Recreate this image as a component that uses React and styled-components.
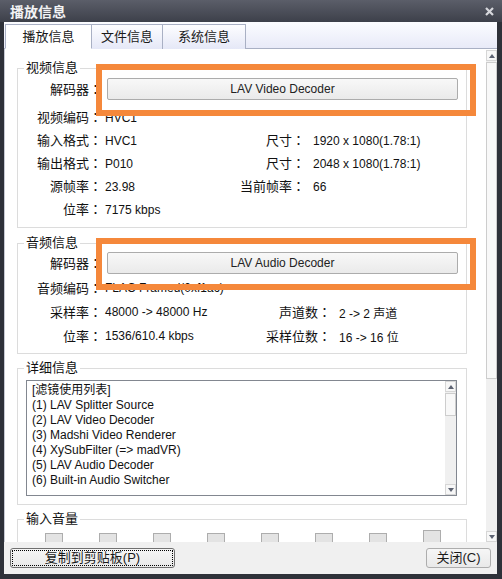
import styled, { createGlobalStyle } from "styled-components";

const GlobalStyle = createGlobalStyle`
  html, body {
    margin: 0;
    padding: 0;
  }
  body {
    font-family: "Liberation Sans", "Noto Sans CJK SC", sans-serif;
    font-size: 12px;
    color: #111;
    background: #30333c;
  }
`;

const videoRows = [
  ["视频编码", "HVC1", "", ""],
  ["输入格式", "HVC1", "尺寸", "1920 x 1080(1.78:1)"],
  ["输出格式", "P010", "尺寸", "2048 x 1080(1.78:1)"],
  ["源帧率", "23.98", "当前帧率", "66"],
  ["位率", "7175 kbps", "", ""],
];

const audioRows = [
  ["音频编码", "FLAC Framed(0xf1ac)", "", ""],
  ["采样率", "48000 -> 48000 Hz", "声道数", "2 -> 2 声道"],
  ["位率", "1536/610.4 kbps", "采样位数", "16 -> 16 位"],
];

const filters = [
  "[滤镜使用列表]",
  "(1) LAV Splitter Source",
  "(2) LAV Video Decoder",
  "(3) Madshi Video Renderer",
  "(4) XySubFilter (=> madVR)",
  "(5) LAV Audio Decoder",
  "(6) Built-in Audio Switcher",
];

function FieldLabel({ text }) {
  if (!text) return <Label />;
  return (
    <Label>
      {text}
      <Colon>：</Colon>
    </Label>
  );
}

export default function App() {
  return (
    <>
      <GlobalStyle />
      <WindowDiv>
        <TitleBar>
          <span>播放信息</span>
          <svg width="9" height="9" viewBox="0 0 9 9">
            <path d="M1 1 L8 8 M8 1 L1 8" stroke="#d6d7dc" strokeWidth="2.2" />
          </svg>
        </TitleBar>
        <ClientDiv>
          <TabStrip>
            <Tab $w={87} $active>播放信息</Tab>
            <Tab $w={71}>文件信息</Tab>
            <Tab $w={83}>系统信息</Tab>
          </TabStrip>
          <PageDiv>
            <ContentDiv>
              <Group $mb={7}>
                <Legend>视频信息</Legend>
                <DecoderRow $mt={2} $mb={6}>
                  <FieldLabel text="解码器" />
                  <DecoderButton>LAV Video Decoder</DecoderButton>
                  <Highlight />
                </DecoderRow>
                {videoRows.map((r, i) => (
                  <InfoRow key={i} $h={23} $rl={80}>
                    <FieldLabel text={r[0]} />
                    <Value>{r[1]}</Value>
                    <FieldLabel text={r[2]} />
                    <RightValue>{r[3]}</RightValue>
                  </InfoRow>
                ))}
                <GroupEnd $h={6} />
              </Group>

              <Group $mb={6}>
                <Legend>音频信息</Legend>
                <DecoderRow $mt={1} $mb={2}>
                  <FieldLabel text="解码器" />
                  <DecoderButton>LAV Audio Decoder</DecoderButton>
                  <Highlight />
                </DecoderRow>
                {audioRows.map((r, i) => (
                  <InfoRow key={i} $h={24} $rl={106}>
                    <FieldLabel text={r[0]} />
                    <Value>{r[1]}</Value>
                    <FieldLabel text={r[2]} />
                    <RightValue>{r[3]}</RightValue>
                  </InfoRow>
                ))}
                <GroupEnd $h={5} />
              </Group>

              <Group $mb={6}>
                <Legend>详细信息</Legend>
                <ListBox>
                  <ListText>
                    {filters.map((f) => (
                      <div key={f}>{f}</div>
                    ))}
                  </ListText>
                  <ScrollBar $m="0">
                    <ArrowBtn>
                      <Arrow />
                    </ArrowBtn>
                    <Thumb $h={23} />
                    <Track />
                    <ArrowBtn>
                      <Arrow $down />
                    </ArrowBtn>
                  </ScrollBar>
                </ListBox>
                <GroupEnd $h={8} />
              </Group>

              <Group $mb={0}>
                <Legend>输入音量</Legend>
                <VolumeRow>
                  {[0, 1, 2, 3, 4, 5, 6, 7].map((i) => (
                    <VolumeThumb key={i} $tall={i === 7} />
                  ))}
                </VolumeRow>
              </Group>
            </ContentDiv>
            <ScrollBar $m="1px 0 0">
              <ArrowBtn>
                <Arrow />
              </ArrowBtn>
              <Thumb $h={317} />
              <Track />
              <ArrowBtn>
                <Arrow $down />
              </ArrowBtn>
            </ScrollBar>
          </PageDiv>
          <BottomBar>
            <DialogButton $w={165} $focus>
              复制到剪贴板(P)
            </DialogButton>
            <DialogButton $w={65}>关闭(C)</DialogButton>
          </BottomBar>
        </ClientDiv>
      </WindowDiv>
    </>
  );
}

const WindowDiv = styled.div`
  width: 502px;
  height: 579px;
  background: #2e3139;
  display: flex;
  flex-direction: column;
  overflow: hidden;
`;

const TitleBar = styled.div`
  height: 22px;
  flex-shrink: 0;
  box-sizing: border-box;
  padding: 0 8px 0 10px;
  display: flex;
  align-items: center;
  justify-content: space-between;
  background: linear-gradient(#5b5e69, #3d404a);
  color: #f2f2f4;
  font-family: "Noto Sans CJK SC", sans-serif;
  font-weight: bold;
  font-size: 14px;
  line-height: 22px;
`;

const ClientDiv = styled.div`
  flex: 1;
  margin: 0 5px 5px 4px;
  background: #f0f0f0;
  display: flex;
  flex-direction: column;
`;

const TabStrip = styled.div`
  height: 27px;
  box-sizing: border-box;
  padding: 2px 0 0 1px;
  display: flex;
  align-items: flex-end;
  background: linear-gradient(#fbfcff, #e8eaf8);
  border-bottom: 1px solid #a9b0c4;
`;

const Tab = styled.div`
  width: ${(p) => p.$w}px;
  height: 25px;
  box-sizing: border-box;
  margin-bottom: -1px;
  border: 1px solid #a9b0c4;
  border-left-width: ${(p) => (p.$active ? 1 : 0)}px;
  border-bottom: ${(p) => (p.$active ? "1px solid #fff" : "none")};
  background: ${(p) =>
    p.$active ? "#fff" : "linear-gradient(#fdfdff, #e5e8f7)"};
  display: flex;
  align-items: center;
  justify-content: center;
  font-size: 13px;
  line-height: 16px;
  color: #1a1a1a;
`;

const PageDiv = styled.div`
  height: 493px;
  display: flex;
  background: #fff;
  border-left: 1px solid #c6c9d3;
`;

const ContentDiv = styled.div`
  flex: 1;
  min-width: 0;
  overflow: hidden;
  padding: 11px 19px 0 12px;
`;

const Group = styled.fieldset`
  margin: 0 0 ${(p) => p.$mb}px;
  padding: 0;
  min-width: 0;
  border: 1px solid #dcdcdc;
`;

const Legend = styled.legend`
  margin-left: 6px;
  padding: 0 2px;
  font-size: 13px;
  line-height: 16px;
  color: #111;
`;

const GroupEnd = styled.div`
  height: ${(p) => p.$h}px;
`;

const DecoderRow = styled.div`
  position: relative;
  height: 22px;
  margin: ${(p) => p.$mt}px 0 ${(p) => p.$mb}px;
  display: grid;
  grid-template-columns: 84px 1fr;
  align-items: center;
`;

const Label = styled.span`
  text-align: right;
  font-size: 13px;
  line-height: 16px;
  white-space: nowrap;
  color: #111;
`;

const Colon = styled.span`
  font-family: "Noto Sans CJK TC", sans-serif;
`;

const DecoderButton = styled.div`
  height: 22px;
  box-sizing: border-box;
  margin: 0 8px 0 5px;
  border: 1px solid #acacac;
  border-radius: 2px;
  background: linear-gradient(#f8f8f8, #eaeaea);
  display: flex;
  align-items: center;
  justify-content: center;
  font-size: 12px;
  color: #222;
`;

const Highlight = styled.div`
  position: absolute;
  left: 78px;
  top: -14px;
  width: 380px;
  height: 52px;
  box-sizing: border-box;
  border: 6px solid #f5883b;
  pointer-events: none;
`;

const InfoRow = styled.div`
  height: ${(p) => p.$h}px;
  display: grid;
  grid-template-columns: 84px 123px ${(p) => p.$rl}px 1fr;
  align-items: center;
`;

const Value = styled.span`
  padding-left: 3px;
  white-space: nowrap;
  color: #111;
`;

const RightValue = styled(Value)`
  padding-left: 8px;
`;

const ListBox = styled.div`
  height: 116px;
  box-sizing: border-box;
  margin: 4px 9px 0 8px;
  border: 1px solid #828790;
  display: flex;
  background: #fff;
`;

const ListText = styled.div`
  flex: 1;
  padding: 2px 5px;
  font-size: 12px;
  line-height: 15px;
  color: #111;
  white-space: nowrap;
`;

const ScrollBar = styled.div`
  width: 11px;
  flex-shrink: 0;
  margin: ${(p) => p.$m};
  background: #f0f0f0;
  display: flex;
  flex-direction: column;
`;

const ArrowBtn = styled.div`
  width: 11px;
  height: 11px;
  box-sizing: border-box;
  border: 1px solid #d6d6d6;
  background: #f7f7f7;
  display: flex;
  align-items: center;
  justify-content: center;
`;

const Arrow = styled.div`
  width: 0;
  height: 0;
  border-left: 3.5px solid transparent;
  border-right: 3.5px solid transparent;
  ${(p) =>
    p.$down ? "border-top: 4px solid #5d6372;" : "border-bottom: 4px solid #5d6372;"}
`;

const Thumb = styled.div`
  height: ${(p) => p.$h}px;
  margin-top: 1px;
  box-sizing: border-box;
  border: 1px solid #cdcdcd;
  background: #f8f8f8;
`;

const Track = styled.div`
  flex: 1;
`;

const VolumeRow = styled.div`
  display: flex;
  gap: 36px;
  padding-left: 27px;
  margin-top: 6px;
  align-items: flex-start;
`;

const VolumeThumb = styled.div`
  width: 18px;
  height: 16px;
  margin-top: ${(p) => (p.$tall ? -3 : 0)}px;
  box-sizing: border-box;
  border: 1px solid #adadad;
  background: #e3e3e3;
`;

const BottomBar = styled.div`
  height: 32px;
  box-sizing: border-box;
  padding: 6px 6px 0;
  display: flex;
  justify-content: space-between;
  align-items: flex-start;
  background: #f0f0f0;
`;

const DialogButton = styled.div`
  width: ${(p) => p.$w}px;
  height: 20px;
  box-sizing: border-box;
  border: 1px solid ${(p) => (p.$focus ? "#707070" : "#adadad")};
  border-radius: 3px;
  background: linear-gradient(#f6f6f6, #e9e9e9);
  display: flex;
  align-items: center;
  justify-content: center;
  font-size: 13px;
  line-height: 16px;
  color: #1a1a1a;
  ${(p) => (p.$focus ? "outline: 1px dotted #000; outline-offset: -3px;" : "")}
`;
